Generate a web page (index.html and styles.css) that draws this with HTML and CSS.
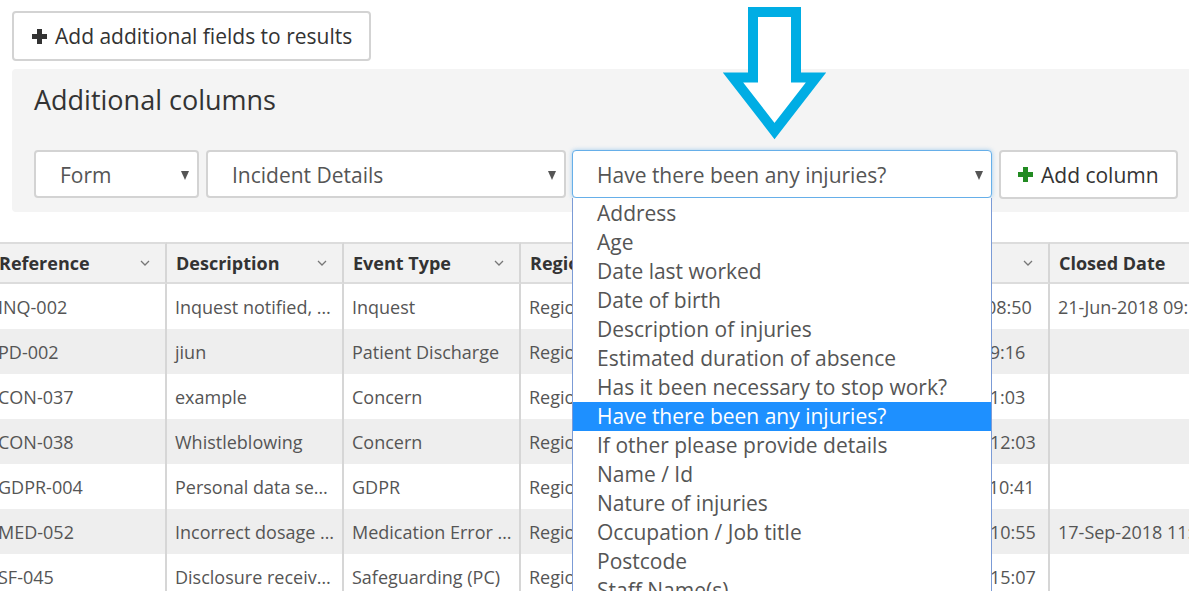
FILE: index.html
```html
<!DOCTYPE html>
<html>

	<head>
		<meta charset="UTF-8">
		<title>Additional columns</title>
		<link rel="stylesheet" href="styles.css">
	</head>

	<body>
		<div class="page">
			<div class="toolbar">
				<button class="btn addFields">
					<svg class="plus" viewBox="0 0 15 15"><path d="M5 0h5v5h5v5h-5v5h-5v-5h-5v-5h5z" /></svg>Add additional fields to results
				</button>
			</div>

			<div class="panel">
				<h2>Additional columns</h2>
				<div class="picker">
					<div class="select formSel"><span>Form</span><i class="caret"></i></div>
					<div class="select sectionSel"><span>Incident Details</span><i class="caret"></i></div>
					<div class="select fieldSel">
						<span>Have there been any injuries?</span><i class="caret"></i>
						<ul class="options">
							<li>Address</li>
							<li>Age</li>
							<li>Date last worked</li>
							<li>Date of birth</li>
							<li>Description of injuries</li>
							<li>Estimated duration of absence</li>
							<li>Has it been necessary to stop work?</li>
							<li class="sel">Have there been any injuries?</li>
							<li>If other please provide details</li>
							<li>Name / Id</li>
							<li>Nature of injuries</li>
							<li>Occupation / Job title</li>
							<li>Postcode</li>
							<li>Staff Name(s)</li>
							<li>Was first aid given?</li>
						</ul>
					</div>
					<button class="btn addCol">
						<svg class="plus green" viewBox="0 0 15 15"><path d="M5 0h5v5h5v5h-5v5h-5v-5h-5v-5h5z" /></svg>Add column
					</button>
				</div>
			</div>

			<div class="results">
				<table>
					<colgroup>
						<col class="c177">
						<col class="c177">
						<col class="c177">
						<col class="c177">
						<col class="c175">
						<col class="c177">
						<col class="c200">
					</colgroup>
					<thead>
						<tr>
							<th><div class="head">Reference<svg class="sort" viewBox="0 0 10 6"><polyline points="1,1 5,5 9,1" /></svg></div></th>
							<th><div class="head">Description<svg class="sort" viewBox="0 0 10 6"><polyline points="1,1 5,5 9,1" /></svg></div></th>
							<th><div class="head">Event Type<svg class="sort" viewBox="0 0 10 6"><polyline points="1,1 5,5 9,1" /></svg></div></th>
							<th><div class="head">Region<svg class="sort" viewBox="0 0 10 6"><polyline points="1,1 5,5 9,1" /></svg></div></th>
							<th><div class="head">Status<svg class="sort" viewBox="0 0 10 6"><polyline points="1,1 5,5 9,1" /></svg></div></th>
							<th><div class="head">Reported<svg class="sort" viewBox="0 0 10 6"><polyline points="1,1 5,5 9,1" /></svg></div></th>
							<th><div class="head">Closed Date</div></th>
						</tr>
					</thead>
					<tbody>
						<tr>
							<td>INQ-002</td>
							<td>Inquest notified, …</td>
							<td>Inquest</td>
							<td>Region 1</td>
							<td>Open</td>
							<td>21-Jun-2018 08:50</td>
							<td>21-Jun-2018 09:12</td>
						</tr>
						<tr>
							<td>PD-002</td>
							<td>jiun</td>
							<td>Patient Discharge</td>
							<td>Region 1</td>
							<td>Open</td>
							<td>21-Jul-2018 09:16</td>
							<td></td>
						</tr>
						<tr>
							<td>CON-037</td>
							<td>example</td>
							<td>Concern</td>
							<td>Region 1</td>
							<td>Open</td>
							<td>21-Jul-2018 11:03</td>
							<td></td>
						</tr>
						<tr>
							<td>CON-038</td>
							<td>Whistleblowing</td>
							<td>Concern</td>
							<td>Region 2</td>
							<td>Open</td>
							<td>12-Sep-2018 12:03</td>
							<td></td>
						</tr>
						<tr>
							<td>GDPR-004</td>
							<td>Personal data se…</td>
							<td>GDPR</td>
							<td>Region 2</td>
							<td>Open</td>
							<td>14-Apr-2018 10:41</td>
							<td></td>
						</tr>
						<tr>
							<td>MED-052</td>
							<td>Incorrect dosage …</td>
							<td>Medication Error …</td>
							<td>Region 1</td>
							<td>Closed</td>
							<td>17-Sep-2018 10:55</td>
							<td>17-Sep-2018 11:20</td>
						</tr>
						<tr>
							<td>SF-045</td>
							<td>Disclosure receiv…</td>
							<td>Safeguarding (PC)</td>
							<td>Region 3</td>
							<td>Open</td>
							<td>18-Sep-2018 15:07</td>
							<td></td>
						</tr>
					</tbody>
				</table>
			</div>

			<!-- pointer to the field picker -->
			<svg class="hint" viewBox="0 0 120 150">
				<polygon points="38,12 81,12 81,77.5 101,77.5 59.5,131 18,77.5 38,77.5" />
			</svg>
		</div>
	</body>

</html>
```

FILE: styles.css
```css
* {
	margin: 0;
	padding: 0;
	box-sizing: border-box;
}

html,
body {
	height: 100%;
	overflow: hidden;
}

body {
	font-family: "Open Sans", "Liberation Sans", sans-serif;
	color: #333;
	background: #fff;
}

.page {
	position: relative;
	height: 100%;
}

.toolbar {
	padding: 11px 0 0 12px;
}

.btn {
	display: inline-flex;
	align-items: center;
	height: 50px;
	background: #fff;
	border: 2px solid #d3d3d3;
	border-radius: 4px;
	font-family: inherit;
	font-size: 21px;
	color: #333;
	cursor: pointer;
}

.addFields {
	width: 359px;
	padding-left: 18px;
}

.plus {
	width: 15px;
	height: 15px;
	margin-right: 8px;
	fill: #333;
}

.plus.green {
	fill: #228b22;
}

.panel {
	margin: 8px -10px 0 12px;
	padding: 13px 0 13px 22px;
	background: #f4f4f4;
	border-radius: 4px;
}

.panel h2 {
	font-size: 27px;
	font-weight: 400;
	line-height: 36px;
	color: #333;
}

.picker {
	display: flex;
	margin-top: 32px;
}

.select {
	position: relative;
	display: flex;
	align-items: center;
	height: 48px;
	padding: 2px 0 0 24px;
	background: #fff;
	border: 2px solid #d3d3d3;
	border-radius: 4px;
	font-size: 21px;
	color: #555;
	white-space: nowrap;
}

.formSel {
	width: 165px;
	margin-right: 7px;
}

.sectionSel {
	width: 360px;
	margin-right: 6px;
}

.fieldSel {
	width: 420px;
	margin-right: 7px;
	border: 1px solid #66afe9;
	box-shadow: 0 0 4px rgba(102, 175, 233, 0.6);
}

.caret {
	margin-left: auto;
	margin-right: 8px;
	border-left: 4.5px solid transparent;
	border-right: 4.5px solid transparent;
	border-top: 9px solid #555;
}

.options {
	position: absolute;
	top: calc(100% + 1px);
	left: -1px;
	right: -1px;
	z-index: 2;
	padding-top: 1px;
	list-style: none;
	background: #fff;
	border: 1px solid #7b9bd6;
	border-top: none;
}

.options li {
	height: 29px;
	line-height: 29px;
	padding-left: 24px;
	font-size: 21px;
	color: #555;
}

.options .sel {
	background: #1e90ff;
	color: #fff;
}

.addCol {
	width: 179px;
	height: 49px;
	padding-left: 17px;
}

.results {
	margin: 30px 0 0 -10px;
}

table {
	width: 1260px;
	table-layout: fixed;
	border-collapse: separate;
	border-spacing: 0;
}

.c177 {
	width: 177px;
}

.c175 {
	width: 175px;
}

.c200 {
	width: 200px;
}

th {
	height: 42px;
	padding: 0 15px 0 9px;
	background: #f2f2f2;
	border-top: 2px solid #dcdcdc;
	border-bottom: 2px solid #dcdcdc;
	border-right: 2px solid #d6d6d6;
	text-align: left;
	font-size: 18px;
	font-weight: 700;
	color: #333;
}

th .head {
	display: flex;
	align-items: center;
	justify-content: space-between;
	white-space: nowrap;
	overflow: hidden;
}

.sort {
	width: 10px;
	height: 6px;
	fill: none;
	stroke: #777;
	stroke-width: 1.3;
}

td {
	height: 45px;
	padding: 0 6px 0 8px;
	border-right: 2px solid #d6d6d6;
	font-size: 18px;
	color: #555;
	white-space: nowrap;
	overflow: hidden;
	text-overflow: ellipsis;
}

tbody tr:nth-child(even) td {
	background: #eee;
}

.hint {
	position: absolute;
	left: 715px;
	top: 0;
	width: 120px;
	height: 150px;
	z-index: 3;
}

.hint polygon {
	fill: #fff;
	stroke: #00ade4;
	stroke-width: 10;
	stroke-linejoin: miter;
	stroke-miterlimit: 10;
}
```
